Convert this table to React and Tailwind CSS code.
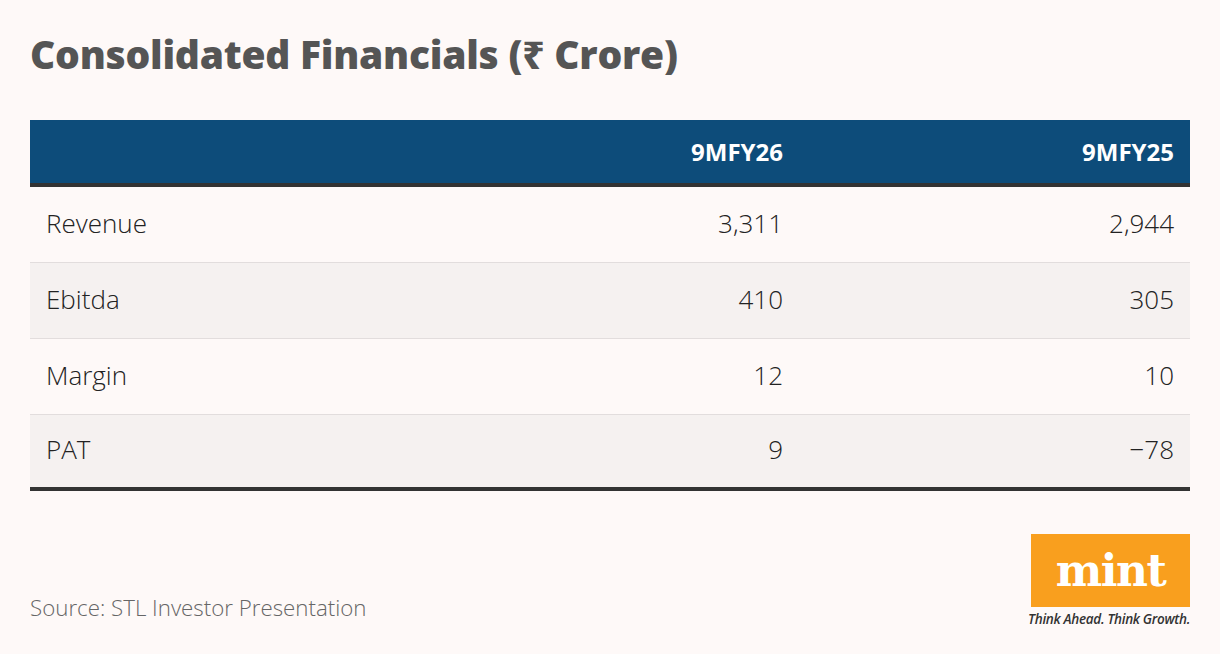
import React from "react";

const rows = [
  ["Revenue", "3,311", "2,944"],
  ["Ebitda", "410", "305"],
  ["Margin", "12", "10"],
  ["PAT", "9", "−78"],
];

export default function App() {
  return (
    <div
      className="w-[1220px] h-[654px] bg-[#fef9f8] px-[30px] pt-[28px] flex flex-col"
      style={{ fontFamily: '"Open Sans", "Noto Sans", sans-serif' }}
    >
      <h1 className="text-[39px] leading-[52px] font-extrabold text-[#555555] tracking-[-0.25px]">
        Consolidated Financials (₹ Crore)
      </h1>
      <div className="mt-[40px] w-[1160px]">
        <div className="grid grid-cols-[380px_389px_391px] h-[63px] items-center bg-[#0d4c7a] border-b-4 border-[#333333] box-content">
          <div />
          <div className="text-right pr-4 text-white font-bold text-[24px]">9MFY26</div>
          <div className="text-right pr-4 text-white font-bold text-[24px]">9MFY25</div>
        </div>
        {rows.map((r, i) => (
          <div
            key={r[0]}
            className={`grid grid-cols-[380px_389px_391px] items-center h-[76px] text-[26px] font-light text-[#222222] leading-[30px] pb-[4px] ${
              i % 2 === 1 ? "bg-[#f5f1f0]" : ""
            } ${i < rows.length - 1 ? "border-b border-[#e2dddd]" : "border-b-4 border-[#333333]"}`}
          >
            <div className="pl-4">{r[0]}</div>
            <div className="text-right pr-4">{r[1]}</div>
            <div className="text-right pr-4">{r[2]}</div>
          </div>
        ))}
      </div>
      <div className="flex justify-between items-start mt-[40px] w-[1160px]">
        <div className="mt-[60px] text-[22.3px] font-light text-[#666666]">
          Source: STL Investor Presentation
        </div>
        <div className="flex flex-col items-end mt-[3px]">
          <div className="w-[159px] h-[73px] bg-[#f99f1e] flex items-center justify-center">
            <span
              className="text-white font-bold text-[44px] leading-none tracking-[-1.5px]"
              style={{ fontFamily: '"DejaVu Serif", serif' }}
            >
              mint
            </span>
          </div>
          <div className="mt-[4px] text-[13.5px] italic font-semibold text-[#333333] tracking-[-0.3px] leading-[16px]">
            Think Ahead. Think Growth.
          </div>
        </div>
      </div>
    </div>
  );
}
